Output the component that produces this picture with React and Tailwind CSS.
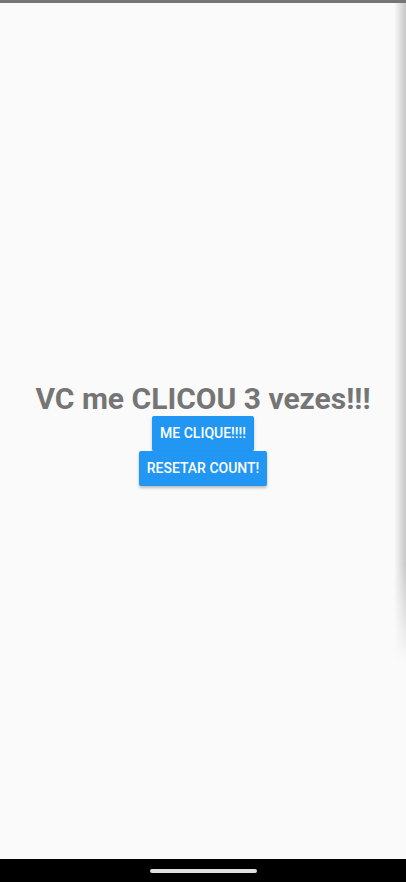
import React, { useState } from 'react';

const font = { fontFamily: 'Roboto, "Liberation Sans", sans-serif' };

const Button = ({ children, onClick }) => (
  <button
    onClick={onClick}
    className="h-[35px] px-2 rounded-[2px] bg-[#2196f3] text-white text-[14px] font-medium uppercase shadow-[0_2px_3px_rgba(0,0,0,0.25)]"
  >
    {children}
  </button>
);

export default function App() {
  const [count, setCount] = useState(3);

  return (
    <div className="relative flex flex-col h-[882px] w-[406px] bg-[#fafafa] overflow-hidden" style={font}>
      <div className="h-[3px] bg-[#757575]" />

      <main className="flex-1 flex flex-col items-center justify-center pt-[5px]">
        <h1 className="text-[30px] leading-[35px] font-bold text-[#757575]">
          VC me CLICOU {count} vezes!!!
        </h1>
        <div className="flex flex-col items-center">
          <Button onClick={() => setCount(count + 1)}>ME CLIQUE!!!!</Button>
          <Button onClick={() => setCount(0)}>RESETAR COUNT!</Button>
        </div>
      </main>

      <div className="h-[23px] bg-black flex items-center justify-center">
        <div className="w-[107px] h-[4px] rounded-full bg-[#e0e0e0]" />
      </div>

      {/* edge shadow of a drawer on the right */}
      <div className="absolute right-0 top-[3px] h-[660px] w-[12px] bg-linear-to-l from-black/20 to-transparent [mask-image:linear-gradient(to_bottom,black_85%,transparent)]" />
    </div>
  );
}
